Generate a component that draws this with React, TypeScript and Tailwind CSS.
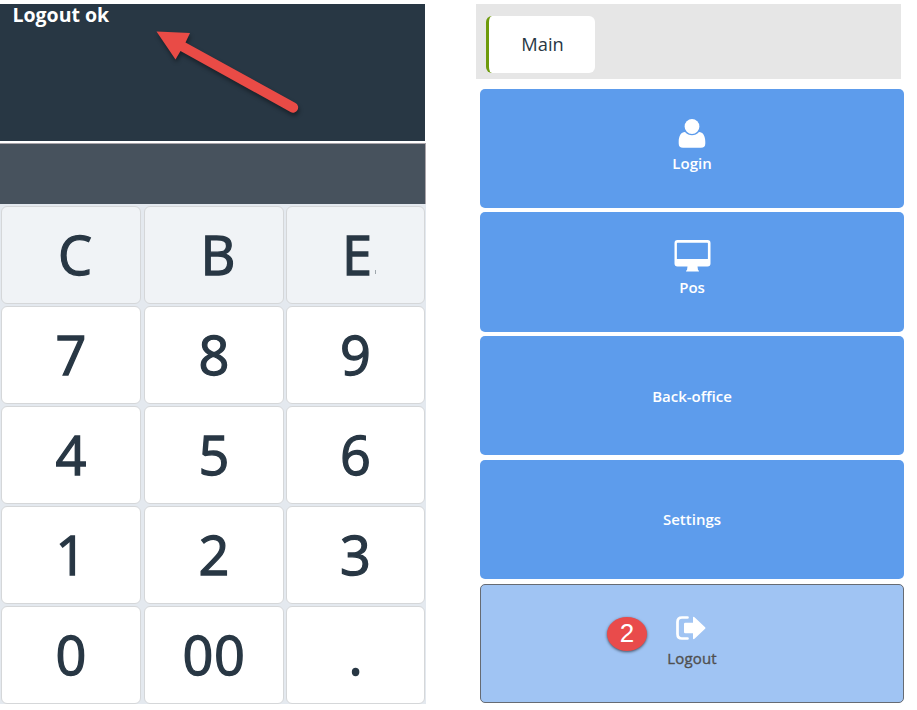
import type { ReactNode } from 'react';

const keys = ['C', 'B', 'E', '7', '8', '9', '4', '5', '6', '1', '2', '3', '0', '00', '.'];

function Key({ label, index }: { label: string; index: number }) {
  return (
    <button
      className={`relative flex h-[98px] items-center justify-center rounded-[6px] border border-[#d5d7d9] pb-[2px] text-[54px] leading-none font-normal text-[#283744] [-webkit-text-stroke:1.3px_#283744] ${index < 3 ? 'bg-[#f0f3f6]' : 'bg-white'}`}
    >
      <span className={index < 2 ? 'ml-[8px]' : index === 2 ? 'ml-[3px]' : label === '00' ? 'tracking-[0.5px]' : ''}>{label}</span>
      {label === 'E' && <span className="absolute top-[63px] left-[88px] h-[4px] w-px bg-[#a0a7ad]" />}
    </button>
  );
}

function UserIcon() {
  return (
    <svg width="28" height="30" viewBox="0 0 28 30" fill="#fff">
      <path d="M7 13C3 13 .7 17 .7 23v1.500q0 4.300 4.300 4.300h18q4.300 0 4.300-4.300V23c0-6-2.300-10-6.300-10q-3 3.300-7 3.300T7 13Z" />
      <circle cx="14" cy="7.500" r="8" fill="#5d9cec" />
      <circle cx="14" cy="7.500" r="7.400" />
    </svg>
  );
}

function DesktopIcon() {
  return (
    <svg width="37" height="32" viewBox="0 0 37 32" fill="#fff">
      <path
        fillRule="evenodd"
        d="M3.500 0h30q3 0 3 3v20.500q0 3-3 3h-10l.5 3.500q1 .4 1 1.500h-13q0-1.100 1-1.500l.5-3.500h-10q-3 0-3-3V3q0-3 3-3Zm0 2.700q-.6 0-.6.6V19h31V3.300q0-.6-.6-.6Z"
      />
    </svg>
  );
}

function LogoutIcon() {
  return (
    <svg className="-ml-[2px]" width="30" height="25" viewBox="0 0 30 25" fill="#fff">
      <path d="M11.500 1.500H6q-4.500 0-4.500 4.500v12q0 4.500 4.500 4.500h5.500" fill="none" stroke="#fff" strokeWidth="2.700" strokeLinecap="round" />
      <path d="M8 8q0-1.200 1.200-1.200H17V1.800q0-1.700 1.500-.6l10.600 10q.9.800 0 1.600l-10.600 10q-1.500 1.100-1.500-.6v-5H9.200Q8 17.200 8 16Z" />
    </svg>
  );
}

function MenuButton({ label, icon, className = '' }: { label: string; icon?: ReactNode; className?: string }) {
  return (
    <button
      className={`flex w-[424px] flex-col items-center rounded-[5px] bg-[#5d9cec] text-[15px] leading-[20px] font-semibold text-white ${className}`}
    >
      {icon}
      <span>{label}</span>
    </button>
  );
}

export default function App() {
  return (
    <div className="flex h-[710px] w-[917px] items-start overflow-hidden bg-white pt-1 font-['Open_Sans',sans-serif]">
      <section className="w-[426px] shrink-0">
        <div className="relative mb-[2px] h-[137px] w-[425px] bg-[#283744] pl-[12.5px] text-[19.5px] leading-[22px] font-bold text-white">
          Logout ok
          <svg className="absolute top-0 left-0 drop-shadow-[1px_3px_2px_rgba(0,0,0,0.4)]" width="320" height="136" viewBox="0 4 320 136" fill="#e94b46">
            <path d="M156.500 31.500 190 33l-4.500 9.500 110 60.500a5.100 5.100 0 0 1-5 9L180.500 51l-5 8.500Z" />
          </svg>
        </div>
        <div className="h-[61px] border-t border-r border-[#aaa5aa] bg-[#47525d]" />
        <div className="grid h-[500px] grid-cols-[140px_140px_139px] content-start gap-y-[2px] bg-[#e4e9ef] pt-[2px] pl-px">
          {keys.map((k, i) => (
            <div key={k} className={i % 3 === 1 ? 'ml-[3px] mr-[-3px]' : i % 3 === 2 ? 'ml-[5px] mr-[-5px]' : ''}>
              <div className="grid">
                <Key label={k} index={i} />
              </div>
            </div>
          ))}
        </div>
      </section>
      <section className="ml-[50px] w-[428px]">
        <div className="h-[75px] w-[425px] bg-[#e6e6e6] pt-3 pl-[10px]">
          <div className="flex h-[57px] w-[109px] items-center justify-center rounded-[6px] border-l-[3px] border-[#6d9a0b] bg-white pb-[2px] pl-px text-[18.3px] text-[#283744]">
            Main
          </div>
        </div>
        <nav className="mt-[10px] ml-1 flex flex-col">
          <MenuButton label="Login" icon={<div className="mb-[4px]"><UserIcon /></div>} className="h-[119px] pt-[30px]" />
          <MenuButton label="Pos" icon={<div className="mb-[5px]"><DesktopIcon /></div>} className="mt-1 h-[120px] pt-[28px]" />
          <MenuButton label="Back-office" className="mt-1 h-[119px] justify-center" />
          <MenuButton label="Settings" className="mt-[5px] h-[119px] justify-center pb-[2px]" />
          <div className="relative mt-[5px]">
            <button className="flex h-[119px] w-[424px] flex-col items-center rounded-[5px] border border-[#666b73] bg-[#a0c4f3] pt-[31px] text-[15px] leading-[20px] font-normal text-[#505050] [-webkit-text-stroke:0.35px_#505050]">
              <LogoutIcon />
              <span className="mt-[7px] tracking-[0.15px]">Logout</span>
            </button>
            <span className="absolute top-[33px] left-[127px] flex h-[34px] w-[40px] items-center justify-center rounded-[50%] bg-[#e94b4b] pb-[2px] font-['Liberation_Sans',sans-serif] text-[26px] leading-none text-white shadow-[0_1px_3px_rgba(0,0,0,0.6)]">
              2
            </span>
          </div>
        </nav>
      </section>
    </div>
  );
}
